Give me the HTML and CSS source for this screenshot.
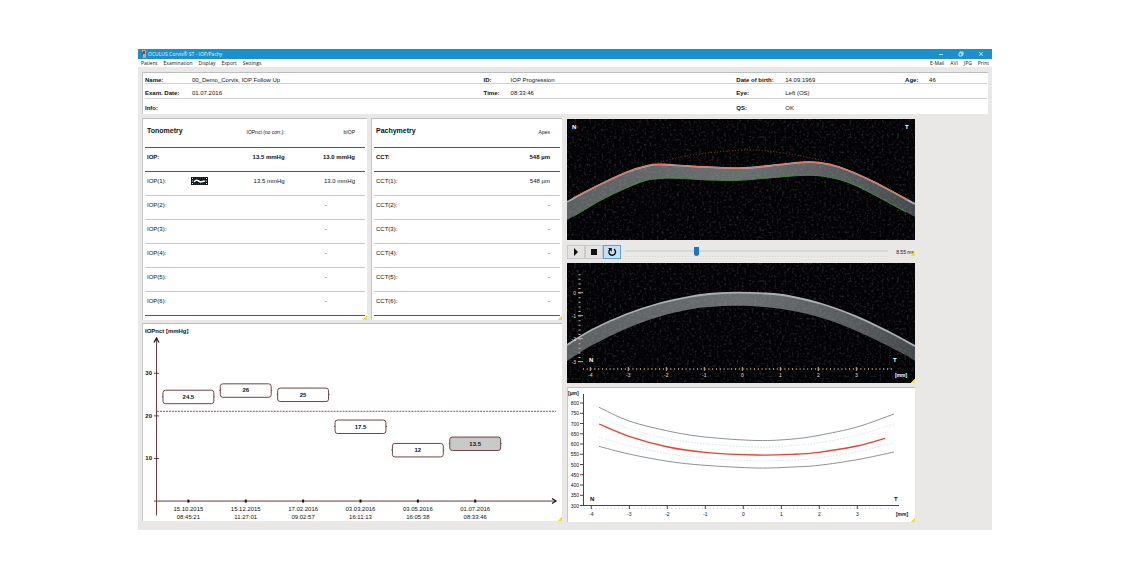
FILE: index.html
```html
<!DOCTYPE html>
<html lang="en">
<head>
<meta charset="utf-8">
<title>OCULUS Corvis ST - IOP/Pachy</title>
<link rel="stylesheet" href="styles.css">
</head>
<body>
<div class="app">
  <header class="titlebar">
    <svg class="app-icon" viewBox="0 0 6 8" aria-hidden="true"><rect x="1" y="0" width="4" height="5" fill="#b9a9a0"/><rect x="2" y="1" width="2" height="3" fill="#8c4a3c"/><rect x="0" y="2" width="2" height="3" fill="#6b6460"/><rect x="2" y="5" width="3" height="3" fill="#b9aca2"/></svg>
    <h1 class="title">OCULUS Corvis® ST - IOP/Pachy</h1>
    <div class="window-buttons">
      <button class="win-btn" aria-label="Minimize"><svg viewBox="0 0 6 6"><path d="M1 3.500H5"/></svg></button>
      <button class="win-btn" aria-label="Restore"><svg viewBox="0 0 6 6"><path d="M1 2H4V5H1ZM2 2V1H5V4H4"/></svg></button>
      <button class="win-btn" aria-label="Close"><svg viewBox="0 0 6 6"><path d="M1 1L5 5M5 1L1 5"/></svg></button>
    </div>
  </header>
  <nav class="menubar">
    <button class="menu">Patient</button>
    <button class="menu">Examination</button>
    <button class="menu">Display</button>
    <button class="menu">Export</button>
    <button class="menu">Settings</button>
    <span class="menu-space"></span>
    <button class="menu">E-Mail</button>
    <button class="menu">AVI</button>
    <button class="menu">JPG</button>
    <button class="menu">Print</button>
  </nav>

  <section class="patient">
    <dl class="info-row info-first">
      <dt>Name:</dt><dd>00_Demo_Corvis, IOP Follow Up</dd>
      <dt>ID:</dt><dd>IOP Progression</dd>
      <dt>Date of birth:</dt><dd>14.09.1969</dd>
      <dt>Age:</dt><dd>46</dd>
    </dl>
    <dl class="info-row">
      <dt>Exam. Date:</dt><dd>01.07.2016</dd>
      <dt>Time:</dt><dd>08:33:46</dd>
      <dt>Eye:</dt><dd>Left (OS)</dd>
    </dl>
    <dl class="info-row">
      <dt>Info:</dt><dd></dd>
      <dt></dt><dd></dd>
      <dt>QS:</dt><dd>OK</dd>
    </dl>
  </section>

  <main class="main">
    <div class="left">
      <div class="tables">
        <section class="panel corner">
          <table class="readings tono">
            <colgroup><col class="c-label"><col class="c-icon"><col class="c-nct"><col class="c-biop"></colgroup>
            <thead><tr><th colspan="2" class="heading">Tonometry</th><th>IOPnct (no corr.):</th><th>bIOP</th></tr></thead>
            <tbody>
              <tr class="total"><th>IOP:</th><td></td><td>13.5 mmHg</td><td>13.0 mmHg</td></tr>
              <tr><th>IOP(1):</th><td><svg class="film" viewBox="0 0 17 8" role="img" aria-label="Video"><rect width="17" height="8" fill="#10161a"/><path d="M1.500 1V7M15.500 1V7" stroke="#dfe6e8" stroke-dasharray="1 1.500"/><path d="M3 1H14M3 7H14" stroke="#7d8588" stroke-width=".5" stroke-dasharray="1 1"/><path d="M3 5C5 2.500 6 3 8.500 4.500S12 3 14 4.500" fill="none" stroke="#fff" stroke-width="1.500"/></svg></td><td>13.5 mmHg</td><td>13.0 mmHg</td></tr>
              <tr><th>IOP(2):</th><td></td><td></td><td class="none">-</td></tr>
              <tr><th>IOP(3):</th><td></td><td></td><td class="none">-</td></tr>
              <tr><th>IOP(4):</th><td></td><td></td><td class="none">-</td></tr>
              <tr><th>IOP(5):</th><td></td><td></td><td class="none">-</td></tr>
              <tr><th>IOP(6):</th><td></td><td></td><td class="none">-</td></tr>
            </tbody>
          </table>
        </section>
        <section class="panel corner">
          <table class="readings">
            <thead><tr><th class="heading">Pachymetry</th><th>Apex</th></tr></thead>
            <tbody>
              <tr class="total"><th>CCT:</th><td>548 µm</td></tr>
              <tr><th>CCT(1):</th><td>548 µm</td></tr>
              <tr><th>CCT(2):</th><td>-</td></tr>
              <tr><th>CCT(3):</th><td>-</td></tr>
              <tr><th>CCT(4):</th><td>-</td></tr>
              <tr><th>CCT(5):</th><td>-</td></tr>
              <tr><th>CCT(6):</th><td>-</td></tr>
            </tbody>
          </table>
        </section>
      </div>
      <section class="panel corner">
        <svg id="trend" class="plot" viewBox="0 0 420 198" role="img" aria-label="IOP trend"></svg>
      </section>
    </div>

    <div class="right">
      <svg id="scan-live" class="scan" viewBox="0 0 348 121" role="img" aria-label="Corneal scan"></svg>
      <div class="player corner">
        <button class="play-btn" aria-label="Play"><svg viewBox="0 0 10 10"><path d="M3 1L7 5L3 9Z"/></svg></button>
        <button class="play-btn" aria-label="Stop"><svg viewBox="0 0 10 10"><path d="M2 2H8V8H2Z"/></svg></button>
        <button class="play-btn active" aria-label="Loop"><svg viewBox="0 0 10 10"><path d="M7 2.200A3.300 3.300 0 1 1 3 2.500" fill="none" stroke="#111" stroke-width="1.400"/><path d="M1 1H4.800V4.800Z"/></svg></button>
        <input class="seek" type="range" min="0" max="32" step="0.01" value="8.55" aria-label="Time position">
        <output class="time">8.55 ms</output>
      </div>
      <div class="scan-box corner"><svg id="scan-ref" class="scan" viewBox="0 0 348 120" role="img" aria-label="Reference scan"></svg></div>
      <section class="panel corner profile">
        <svg id="profile" class="plot" viewBox="0 0 347 134" role="img" aria-label="Thickness profile"></svg>
      </section>
    </div>
  </main>
</div>
<script src="charts.js"></script>
</body>
</html>
```

FILE: styles.css
```css
* { box-sizing: border-box; }

body {
  margin: 0;
  padding: 49px 138px;
  background: #fff;
  color: #111;
  font: 6px/8px "Liberation Sans", Arial, sans-serif;
}

button {
  margin: 0;
  padding: 0;
  border: 0;
  background: none;
  color: inherit;
  font: inherit;
}

.app {
  padding-bottom: 8px;
  background: #e9e8e7;
}

.titlebar {
  display: flex;
  align-items: center;
  height: 10px;
  padding: 0 8px 0 3px;
  background: #1a90cf;
  color: #e4f4fc;
}
.app-icon { width: 6px; height: 8px; }
.title {
  flex: 1;
  margin: 0 0 0 1px;
  font: 5px/8px "Open Sans", sans-serif;
}
.window-buttons { display: flex; gap: 14px; }
.win-btn { width: 6px; height: 6px; }
.win-btn svg {
  display: block;
  fill: none;
  stroke: #e8f6fd;
  stroke-width: 0.8;
}

.menubar {
  display: flex;
  gap: 6px;
  height: 8px;
  padding: 0 3px;
  background: #fff;
  font: 5px/9px "Open Sans", sans-serif;
}
.menu-space { flex: 1; }

.patient {
  margin: 5px 4px 4px;
  border-top: 1px solid #b9bfc3;
  border-left: 1px solid #c4c8cb;
  background: #fff;
}
.info-row {
  display: grid;
  grid-template-columns: 47fr 292fr 27fr 226fr 49fr 120fr 24fr 58fr;
  align-items: center;
  height: 15px;
  margin: 0 1px 0 2px;
  padding-top: 3px;
  border-bottom: 1px solid #cfd1d1;
  white-space: nowrap;
}
.info-first { height: 11px; }
.info-row:last-child { border-bottom: 0; }
.info-row dt { min-width: 0; font-weight: bold; }
.info-row dd { min-width: 0; margin: 0; }

.main {
  display: grid;
  grid-template-columns: minmax(0, 420fr) minmax(0, 348fr) minmax(0, 68fr);
  gap: 5px;
  padding: 0 4px;
}
.left { display: grid; gap: 3px; align-content: start; }
.tables {
  display: grid;
  grid-template-columns: minmax(0, 225fr) minmax(0, 191fr);
  gap: 4px;
}
.panel {
  border-top: 1px solid #b9bfc3;
  border-left: 1px solid #c4c8cb;
  background: #fff;
}
.corner { position: relative; }
.corner::after {
  content: "";
  position: absolute;
  right: 0;
  bottom: 0;
  width: 4px;
  height: 4px;
  background: linear-gradient(135deg, transparent 50%, #f4e327 50%);
}
.plot, .scan { display: block; width: 100%; }

.readings {
  width: calc(100% - 4px);
  margin: 0 2px 4px;
  border-collapse: collapse;
  table-layout: fixed;
}
.readings tr { height: 24px; border-bottom: 1px solid #c3c9c9; }
.readings thead tr { height: 28px; border-bottom-color: #7d4a4a; }
.readings .total, .readings tr:last-child { border-bottom-color: #7d4a4a; }
.readings .total { font-weight: bold; }
.readings th, .readings td {
  padding: 0 10px 4px 0;
  font-weight: inherit;
  text-align: right;
  vertical-align: middle;
  white-space: nowrap;
}
.readings th:first-child { padding: 0 0 4px 2px; text-align: left; }
.readings thead th { padding-bottom: 1px; }
.readings thead { font-size: 5px; font-weight: normal; }
.readings thead .heading { font-size: 7px; font-weight: bold; }
.readings .none { padding-right: 38px; }
.c-label { width: 21%; }
.c-icon { width: 14%; }
.c-nct { width: 33%; }
.c-biop { width: 32%; }
.tono td:nth-child(2) { padding: 0 0 4px; text-align: left; }
.film { display: block; width: 17px; height: 8px; }

.right { padding-top: 1px; }
.player {
  display: flex;
  align-items: center;
  height: 23px;
  padding-right: 1px;
}
.play-btn {
  display: flex;
  align-items: center;
  justify-content: center;
  width: 18px;
  height: 14px;
  border: 1px solid #c9c9c9;
  background: #e3e3e3;
}
.play-btn svg { width: 10px; height: 10px; fill: #111; }
.play-btn.active { border-color: #5ba3d6; background: #c5e0f5; }
.seek {
  flex: 1;
  min-width: 0;
  height: 10px;
  margin: 0 8px 0 4px;
  appearance: none;
  background:
    linear-gradient(#d3dadb, #d3dadb) 0 3px / 100% 2px no-repeat,
    repeating-linear-gradient(90deg, #d6d6d6 0 1px, transparent 1px 3px) 0 9px / 100% 1px no-repeat;
}
.seek::-webkit-slider-thumb {
  appearance: none;
  width: 5px;
  height: 9px;
  background: #1874c4;
  border-radius: 0 0 3px 3px;
}
.time { font-size: 5px; white-space: nowrap; }
.player.corner::after { bottom: 7px; }
.profile { margin-top: 4px; }

svg text { font-family: "Liberation Sans", Arial, sans-serif; font-size: 6px; fill: #111; }
svg .bold { font-weight: bold; }
svg .small { font-size: 5px; }
svg .light { fill: #ecdcd8; }
svg .white { fill: #fff; font-weight: bold; }
svg .end { text-anchor: end; }
svg .mid { text-anchor: middle; }
```

FILE: charts.js
```javascript
const NS = 'http://www.w3.org/2000/svg';

function add(parent, tag, attrs, text) {
  const el = document.createElementNS(NS, tag);
  for (const key in attrs) el.setAttribute(key, attrs[key]);
  if (text !== undefined) el.textContent = text;
  parent.appendChild(el);
  return el;
}

// Smooth path segments through a list of points.
function segments(p) {
  let d = '';
  for (let i = 0; i < p.length - 1; i++) {
    const a = p[i - 1] || p[i], b = p[i], c = p[i + 1], e = p[i + 2] || c;
    d += `C${b[0] + (c[0] - a[0]) / 6} ${b[1] + (c[1] - a[1]) / 6} ${c[0] - (e[0] - b[0]) / 6} ${c[1] - (e[1] - b[1]) / 6} ${c[0]} ${c[1]}`;
  }
  return d;
}
const curve = p => `M${p[0]}` + segments(p);
const band = (top, bottom) => {
  const back = bottom.slice().reverse();
  return curve(top) + `L${back[0]}` + segments(back) + 'Z';
};

function scanBase(svg, id, height, top, bottom) {
  const defs = add(svg, 'defs', {});
  const speckle = (name, matrix, seed) => {
    const f = add(defs, 'filter', { id: name, x: 0, y: 0, width: 1, height: 1, 'color-interpolation-filters': 'sRGB' });
    add(f, 'feTurbulence', { type: 'fractalNoise', baseFrequency: 0.4, numOctaves: 2, seed });
    add(f, 'feColorMatrix', { values: matrix });
  };
  speckle(id + '-dark', '0 0 0 0 .4  0 0 0 0 .4  0 0 0 0 .48  1.6 0 0 0 -.84', 4);
  speckle(id + '-grain', '0 0 0 0 .65  0 0 0 0 .68  0 0 0 0 .68  2 0 0 0 -.9', 9);
  const grad = add(defs, 'linearGradient', { id: id + '-tissue', x1: 0, x2: 1, y1: 0, y2: 0 });
  [[0, '#5c6062'], [0.5, '#6a6e6f'], [0.85, '#55595b'], [1, '#42484b']].forEach(([o, c]) =>
    add(grad, 'stop', { offset: o, 'stop-color': c }));
  const clip = add(defs, 'clipPath', { id: id + '-clip' });
  add(clip, 'path', { d: band(top, bottom) });

  add(svg, 'rect', { width: 348, height, fill: '#030305' });
  add(svg, 'rect', { width: 348, height, filter: `url(#${id}-dark)`, opacity: 0.7 });
  add(svg, 'path', { d: band(top, bottom), fill: `url(#${id}-tissue)` });
  const g = add(svg, 'g', { 'clip-path': `url(#${id}-clip)` });
  add(g, 'rect', { width: 348, height, filter: `url(#${id}-grain)`, opacity: 0.25 });
  add(svg, 'path', { d: curve(top), fill: 'none', stroke: '#a9b1b3', 'stroke-width': 1.8 });
}

function drawLiveScan() {
  const svg = document.getElementById('scan-live');
  const top = [[0, 83], [25, 69.5], [59, 53.5], [82, 46.5], [95, 45.5], [125, 47.3], [172, 49.2], [205, 46.5], [238, 43.2], [252, 43.6], [272, 48], [305, 62], [348, 85]];
  const bottom = [[0, 101], [12, 94], [42, 77], [75, 62.7], [92, 59.7], [109, 59.3], [142, 61], [172, 61.3], [205, 58.7], [239, 56.3], [262, 58.3], [289, 66.7], [339, 93], [348, 98]];
  scanBase(svg, 'live', 121, top, bottom);
  add(svg, 'path', { d: curve([[6, 79], ...top.slice(1, -1), [341, 81]]), fill: 'none', stroke: '#e8705c', 'stroke-width': 1.1 });
  add(svg, 'path', { d: curve([[6, 98], ...bottom.slice(1, -1)]), fill: 'none', stroke: '#3f9448', 'stroke-width': 0.9 });
  add(svg, 'path', { d: curve([[85, 45], [125, 36], [172, 31.3], [199, 31.7], [232, 36.7], [259, 42]]), fill: 'none', stroke: '#b03c32', 'stroke-width': 0.8, 'stroke-dasharray': '1 2' });
  add(svg, 'text', { x: 5, y: 10, class: 'white' }, 'N');
  add(svg, 'text', { x: 338, y: 10, class: 'white' }, 'T');
}

function drawReferenceScan() {
  const svg = document.getElementById('scan-ref');
  const top = [[0, 82], [25, 66.7], [58.7, 51.5], [92, 40.5], [125, 33.3], [149, 30.5], [172, 29.7], [199, 30.5], [219, 32.5], [255, 41], [289, 53.3], [322, 69], [348, 83]];
  const bottom = [[0, 98], [25, 82.3], [59, 65.7], [92, 53.7], [125, 46], [152, 43.3], [172, 42.8], [205, 44.7], [239, 50.7], [272, 60.7], [305, 75], [339, 92.3], [348, 98]];
  scanBase(svg, 'ref', 120, top, bottom);
  const ink = '#cbb0a6';
  add(svg, 'path', { d: 'M16 106H326', stroke: ink, 'stroke-width': 1.6, 'stroke-dasharray': '1 2.8' });
  add(svg, 'path', { d: 'M12.500 11.200V99', stroke: ink, 'stroke-width': 2, 'stroke-dasharray': '1 3.6' });
  for (let v = -4; v <= 3; v++) {
    const x = 175.3 + v * 38;
    add(svg, 'path', { d: `M${x} 104V108`, stroke: ink, 'stroke-width': 1 });
    add(svg, 'text', { x, y: 114, class: 'small light mid' }, v);
  }
  for (let v = 0; v <= 3; v++) {
    const y = 29.7 + v * 23;
    add(svg, 'path', { d: `M11 ${y}H16`, stroke: ink, 'stroke-width': 1 });
    add(svg, 'text', { x: 9, y: y + 2, class: 'small light end' }, v ? -v : 0);
  }
  add(svg, 'text', { x: 22, y: 99, class: 'white' }, 'N');
  add(svg, 'text', { x: 326, y: 99, class: 'white' }, 'T');
  add(svg, 'text', { x: 334, y: 114, class: 'small white mid' }, '[mm]');
}

function drawProfile() {
  const svg = document.getElementById('profile');
  const axis = '#6a3838';
  add(svg, 'path', { d: 'M15.500 6V117.500H331', fill: 'none', stroke: axis });
  for (let v = 300; v <= 800; v += 50) {
    const y = 117.5 - (v - 300) * 0.205;
    add(svg, 'path', { d: `M12 ${y}H16`, stroke: axis });
    add(svg, 'text', { x: 11, y: y + 2, class: 'small end' }, v);
  }
  add(svg, 'path', { d: 'M16 120.500H328', stroke: '#c5cfd2', 'stroke-dasharray': '1 2.8' });
  for (let v = -4; v <= 3; v++) {
    const x = 175.3 + v * 38;
    add(svg, 'path', { d: `M${x} 117V121`, stroke: axis });
    add(svg, 'text', { x, y: 128, class: 'small mid' }, v);
  }
  const xs = [31, 61, 100, 137, 189, 225, 251, 289, 326];
  const line = (ys, attrs) => add(svg, 'path', { d: curve(ys.map((y, i) => [xs[i], y])), fill: 'none', ...attrs });
  const limit = { stroke: '#8d9294', 'stroke-width': 1 };
  const mean = { stroke: '#c6dde8', 'stroke-width': 0.8, 'stroke-dasharray': '1.5 1.5' };
  line([19.3, 33, 43, 49, 52.5, 51, 47.3, 39, 26], limit);
  line([29, 40.7, 50.7, 55.7, 59.2, 57.5, 54.7, 47.3, 36], mean);
  line([49, 57.7, 65.7, 70, 73, 72, 69.7, 63.7, 54.7], mean);
  line([58.3, 66, 73.3, 77.3, 80, 79, 77.3, 71.7, 64], limit);
  const red = [[31, 36], [61, 48.3], [100, 59], [137, 64.3], [189, 67], [225, 66.3], [251, 64.3], [289, 58], [317, 50.3]];
  add(svg, 'path', { d: curve(red), fill: 'none', stroke: '#ee3f2c', 'stroke-width': 1.3 });
  add(svg, 'text', { x: 0, y: 7, class: 'small bold' }, '[µm]');
  add(svg, 'text', { x: 22, y: 113, class: 'bold' }, 'N');
  add(svg, 'text', { x: 326, y: 113, class: 'bold' }, 'T');
  add(svg, 'text', { x: 334, y: 128, class: 'small bold mid' }, '[mm]');
}

function drawTrend() {
  const svg = document.getElementById('trend');
  const axis = '#6a3838';
  const yOf = v => 177.5 - v * 4.27;
  const exams = [
    [24.5, '15.10.2015', '08:45:21'],
    [26, '15.12.2015', '11:27:01'],
    [25, '17.02.2016', '09:02:57'],
    [17.5, '03.03.2016', '16:11:13'],
    [12, '03.05.2016', '16:05:38'],
    [13.5, '01.07.2016', '08:33:46']
  ];
  add(svg, 'text', { x: 2, y: 9, class: 'bold' }, 'IOPnct [mmHg]');
  add(svg, 'path', { d: 'M13.500 14V192M11 177.500H414', stroke: axis });
  add(svg, 'path', { d: 'M11 18.500L13.500 14L16 18.500M410 175L414 177.500L410 180', fill: 'none', stroke: '#111', 'stroke-width': 1.2 });
  [10, 20, 30].forEach(v => {
    add(svg, 'path', { d: `M11 ${yOf(v)}H16`, stroke: axis });
    add(svg, 'text', { x: 9, y: yOf(v) + 2, class: 'bold end' }, v);
  });
  add(svg, 'path', { d: `M14 87.500H414`, stroke: '#84525a', 'stroke-dasharray': '2 1' });
  exams.forEach(([value, date, time], i) => {
    const x = 45.5 + i * 57.5;
    const y = yOf(value);
    add(svg, 'rect', { x: x - 1, y: 176, width: 2, height: 3, fill: '#111' });
    add(svg, 'path', { d: `M${x - 26.5} ${y}H${x + 26.5}`, stroke: axis });
    add(svg, 'rect', { x: x - 25.5, y: y - 6.5, width: 51, height: 13.5, rx: 2.5, fill: i === 5 ? '#c9c9c9' : '#fff', stroke: '#734044' });
    add(svg, 'text', { x, y: y + 2, class: 'bold mid' }, value);
    add(svg, 'text', { x, y: 187, class: 'mid' }, date);
    add(svg, 'text', { x, y: 195, class: 'mid' }, time);
  });
}

drawLiveScan();
drawReferenceScan();
drawProfile();
drawTrend();
```
